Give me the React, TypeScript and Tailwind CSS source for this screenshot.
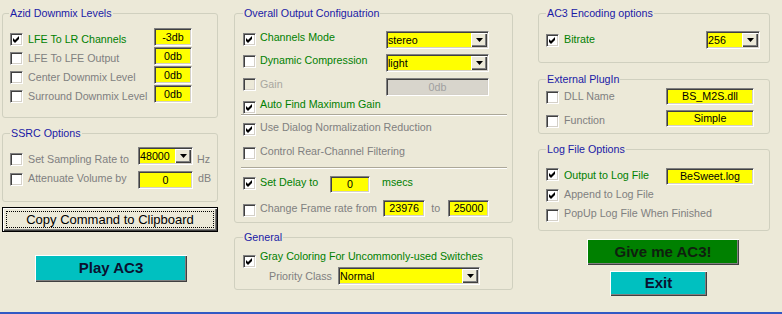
import React from "react";

const sunken =
  "border border-t-[#808080] border-l-[#808080] border-b-white border-r-white shadow-[inset_1px_1px_0_#404040,inset_-1px_-1px_0_#d4d0c8]";
const raised =
  "shadow-[inset_1px_1px_0_#ffffff,inset_-1px_-1px_0_#404040,inset_-2px_-2px_0_#808080]";
const groupBox = "border border-[#d0d0bf] rounded-[3px] min-w-0";
const legendCls = "px-[1px] leading-[13px] text-[#1a1aa6]";
const green = "text-[#008000]";
const gray = "text-[#808080]";

function Check({
  checked = false,
  disabled = false,
  className = "",
}: {
  checked?: boolean;
  disabled?: boolean;
  className?: string;
}) {
  return (
    <span
      className={`flex items-center justify-center w-[13px] h-[13px] shrink-0 ${sunken} ${
        disabled ? "bg-[#ece9d8]" : "bg-white"
      } ${className}`}
    >
      {checked && (
        <svg width="7" height="7" viewBox="0 0 7 7">
          <polygon points="0,2 2,4 6,0 6,3 2,7 0,5" fill="#000" />
        </svg>
      )}
    </span>
  );
}

function Field({
  children,
  className = "",
}: {
  children: React.ReactNode;
  className?: string;
}) {
  return (
    <div
      className={`flex items-center justify-center shrink-0 bg-[#ffff00] text-black leading-[13px] ${sunken} ${className}`}
    >
      {children}
    </div>
  );
}

function Combo({ value, className = "" }: { value: string; className?: string }) {
  return (
    <div className={`flex shrink-0 bg-[#ffff00] ${sunken} ${className}`}>
      <span className="flex-1 self-center pl-[1px] leading-[13px] text-black">{value}</span>
      <span
        className={`w-[16px] m-[1px] bg-[#ece9d8] flex items-center justify-center ${raised}`}
      >
        <svg width="7" height="4" viewBox="0 0 7 4">
          <polygon points="0,0 7,0 3.5,4" fill="#000" />
        </svg>
      </span>
    </div>
  );
}

function Lbl({
  children,
  className = "",
}: {
  children: React.ReactNode;
  className?: string;
}) {
  return <span className={`leading-[13px] whitespace-nowrap ${className}`}>{children}</span>;
}

function Separator() {
  return (
    <div className="h-[2px] -ml-[2px] -mr-[18px] border-t border-t-[#aca899] border-b border-b-white" />
  );
}

export default function App() {
  return (
    <div className="w-[782px] h-[314px] bg-[#ece9d8] flex flex-col font-['Liberation_Sans',Arial,sans-serif] text-[10.7px] overflow-hidden">
      <div className="h-[312px] flex pl-[2px]">
        {/* Left column */}
        <div className="w-[216px] flex flex-col pt-[7px]">
          <fieldset className={`h-[111px] ${groupBox}`}>
            <legend className={`ml-[6px] ${legendCls}`}>Azid Downmix Levels</legend>
            <div className="pt-[8px] pl-[7px] pr-[25px] flex flex-col">
              <div className="flex items-start h-[19px]">
                <Check checked className="mt-[5px]" />
                <Lbl className={`ml-[5px] mt-[5px] ${green}`}>LFE To LR Channels</Lbl>
                <Field className="ml-auto w-[38px] h-[18px]">-3db</Field>
              </div>
              <div className="flex items-start h-[19px]">
                <Check className="mt-[5px]" />
                <Lbl className={`ml-[5px] mt-[5px] ${gray}`}>LFE To LFE Output</Lbl>
                <Field className="ml-auto w-[38px] h-[18px]">0db</Field>
              </div>
              <div className="flex items-start h-[19px]">
                <Check className="mt-[5px]" />
                <Lbl className={`ml-[5px] mt-[5px] ${gray}`}>Center Downmix Level</Lbl>
                <Field className="ml-auto w-[38px] h-[18px]">0db</Field>
              </div>
              <div className="flex items-start h-[19px]">
                <Check className="mt-[5px]" />
                <Lbl className={`ml-[5px] mt-[5px] ${gray}`}>Surround Downmix Level</Lbl>
                <Field className="ml-auto w-[38px] h-[18px]">0db</Field>
              </div>
            </div>
          </fieldset>

          <fieldset className={`mt-[9px] h-[75px] ${groupBox}`}>
            <legend className={`ml-[7px] ${legendCls}`}>SSRC Options</legend>
            <div className="pt-[7px] pl-[7px] flex flex-col">
              <div className="flex items-start h-[24px]">
                <Check className="mt-[6px]" />
                <Lbl className={`ml-[5px] mt-[6px] w-[110px] ${gray}`}>Set Sampling Rate to</Lbl>
                <Combo value="48000" className="w-[55px] h-[18px]" />
                <Lbl className={`ml-[4px] mt-[6px] ${gray}`}>Hz</Lbl>
              </div>
              <div className="flex items-start h-[18px]">
                <Check className="mt-[2px]" />
                <Lbl className={`ml-[5px] mt-[1px] w-[110px] ${gray}`}>Attenuate Volume by</Lbl>
                <Field className="w-[55px] h-[18px]">0</Field>
                <Lbl className={`ml-[5px] mt-[1px] ${gray}`}>dB</Lbl>
              </div>
            </div>
          </fieldset>

          <button
            type="button"
            className={`mt-[5px] h-[25px] w-[216px] border border-black bg-[#ece9d8] flex p-[3px] ${raised}`}
          >
            <span className="flex-1 flex items-center justify-center border border-dotted border-black text-[13px] text-black leading-[15px]">
              Copy Command to Clipboard
            </span>
          </button>

          <button
            type="button"
            className={`mt-[23px] ml-[33px] w-[152px] h-[27px] bg-[#00c0c0] flex items-center justify-center text-[15px] font-bold text-[#0b1030] ${raised}`}
          >
            Play AC3
          </button>
        </div>

        {/* Middle column */}
        <div className="ml-[16px] w-[279px] flex flex-col pt-[7px]">
          <fieldset className={`h-[216px] ${groupBox}`}>
            <legend className={`ml-[8px] ${legendCls}`}>Overall Output Configuatrion</legend>
            <div className="pt-[11px] pl-[8px] pr-[23px] flex flex-col">
              <div className="flex items-start h-[23px]">
                <Check checked className="mt-[2px]" />
                <Lbl className={`ml-[4px] ${green}`}>Channels Mode</Lbl>
                <Combo value="stereo" className="ml-auto w-[103px] h-[18px]" />
              </div>
              <div className="flex items-start h-[24px]">
                <Check className="mt-[1px]" />
                <Lbl className={`ml-[4px] ${green}`}>Dynamic Compression</Lbl>
                <Combo value="light" className="ml-auto w-[103px] h-[18px]" />
              </div>
              <div className="flex items-start h-[23px]">
                <Check disabled />
                <Lbl className="ml-[4px] text-[#a8a79f]">Gain</Lbl>
                <div
                  className={`ml-auto w-[103px] h-[18px] flex items-center justify-center bg-[#d8d5cc] text-[#a0a0a0] ${sunken}`}
                >
                  0db
                </div>
              </div>
              <div className="flex items-start h-[13px]">
                <Check checked />
                <Lbl className={`ml-[4px] -mt-[3px] ${green}`}>Auto Find Maximum Gain</Lbl>
              </div>
              <Separator />
              <div className="flex items-start h-[24px] mt-[7px]">
                <Check checked />
                <Lbl className={`ml-[4px] -mt-[2px] ${gray}`}>Use Dialog Normalization Reduction</Lbl>
              </div>
              <div className="flex items-start h-[13px]">
                <Check />
                <Lbl className={`ml-[4px] -mt-[2px] ${gray}`}>Control Rear-Channel Filtering</Lbl>
              </div>
              <div className="mt-[7px]">
                <Separator />
              </div>
              <div className="flex items-start h-[24px] mt-[7px]">
                <Check checked className="mt-[1px]" />
                <Lbl className={`ml-[4px] w-[70px] ${green}`}>Set Delay to</Lbl>
                <Field className="w-[40px] h-[17px]">0</Field>
                <Lbl className={`ml-[12px] ${green}`}>msecs</Lbl>
              </div>
              <div className="flex items-start h-[17px]">
                <Check className="mt-[4px]" />
                <Lbl className={`ml-[4px] mt-[2px] w-[125px] ${gray}`}>Change Frame rate from</Lbl>
                <Field className="w-[42px] h-[17px]">23976</Field>
                <Lbl className={`ml-[6px] mt-[2px] w-[11px] ${gray}`}>to</Lbl>
                <Field className="ml-[6px] w-[41px] h-[17px]">25000</Field>
              </div>
            </div>
          </fieldset>

          <fieldset className={`mt-[8px] h-[59px] ${groupBox}`}>
            <legend className={`ml-[8px] ${legendCls}`}>General</legend>
            <div className="pt-[11px] pl-[8px] flex flex-col">
              <div className="flex items-start h-[12px]">
                <Check checked />
                <Lbl className={`ml-[4px] -mt-[5px] ${green}`}>
                  Gray Coloring For Uncommonly-used Switches
                </Lbl>
              </div>
              <div className="flex items-start h-[18px]">
                <Lbl className={`ml-[26px] mt-[3px] w-[69px] ${gray}`}>Priority Class</Lbl>
                <Combo value="Normal" className="w-[142px] h-[18px]" />
              </div>
            </div>
          </fieldset>
        </div>

        {/* Right column */}
        <div className="ml-[25px] w-[232px] flex flex-col pt-[7px]">
          <fieldset className={`h-[56px] ${groupBox}`}>
            <legend className={`ml-[7px] ${legendCls}`}>AC3 Encoding options</legend>
            <div className="pt-[11px] pl-[7px] pr-[9px] flex flex-col">
              <div className="flex items-start h-[18px]">
                <Check checked className="mt-[3px]" />
                <Lbl className={`ml-[5px] mt-[2px] ${green}`}>Bitrate</Lbl>
                <Combo value="256" className="ml-auto w-[54px] h-[18px]" />
              </div>
            </div>
          </fieldset>

          <fieldset className={`mt-[10px] h-[61px] ${groupBox}`}>
            <legend className={`ml-[7px] ${legendCls}`}>External PlugIn</legend>
            <div className="pt-[2px] pl-[7px] pr-[15px] flex flex-col">
              <div className="flex items-start h-[22px]">
                <Check className="mt-[3px]" />
                <Lbl className={`ml-[5px] mt-[2px] ${gray}`}>DLL Name</Lbl>
                <Field className="ml-auto w-[88px] h-[17px]">BS_M2S.dll</Field>
              </div>
              <div className="flex items-start h-[17px]">
                <Check className="mt-[5px]" />
                <Lbl className={`ml-[5px] mt-[4px] ${gray}`}>Function</Lbl>
                <Field className="ml-auto w-[88px] h-[17px]">Simple</Field>
              </div>
            </div>
          </fieldset>

          <fieldset className={`mt-[9px] h-[88px] ${groupBox}`}>
            <legend className={`ml-[7px] ${legendCls}`}>Log File Options</legend>
            <div className="pt-[12px] pl-[7px] pr-[15px] flex flex-col">
              <div className="flex items-start h-[21px]">
                <Check checked />
                <Lbl className={`ml-[5px] mt-[1px] ${green}`}>Output to Log File</Lbl>
                <Field className="ml-auto w-[88px] h-[17px]">BeSweet.log</Field>
              </div>
              <div className="flex items-start h-[20px]">
                <Check checked />
                <Lbl className={`ml-[5px] -mt-[1px] ${gray}`}>Append to Log File</Lbl>
              </div>
              <div className="flex items-start h-[13px]">
                <Check />
                <Lbl className={`ml-[5px] -mt-[2px] ${gray}`}>PopUp Log File When Finished</Lbl>
              </div>
            </div>
          </fieldset>

          <button
            type="button"
            className={`mt-[8px] ml-[49px] w-[152px] h-[26px] bg-[#008000] flex items-center justify-center text-[15px] font-bold text-[#0f1f0f] ${raised}`}
          >
            Give me AC3!
          </button>
          <button
            type="button"
            className={`mt-[6px] ml-[72px] w-[97px] h-[25px] bg-[#00c0c0] flex items-center justify-center text-[15px] font-bold text-[#0b1030] ${raised}`}
          >
            Exit
          </button>
        </div>
      </div>
      <div className="h-[2px] bg-[#3159c4]" />
    </div>
  );
}
